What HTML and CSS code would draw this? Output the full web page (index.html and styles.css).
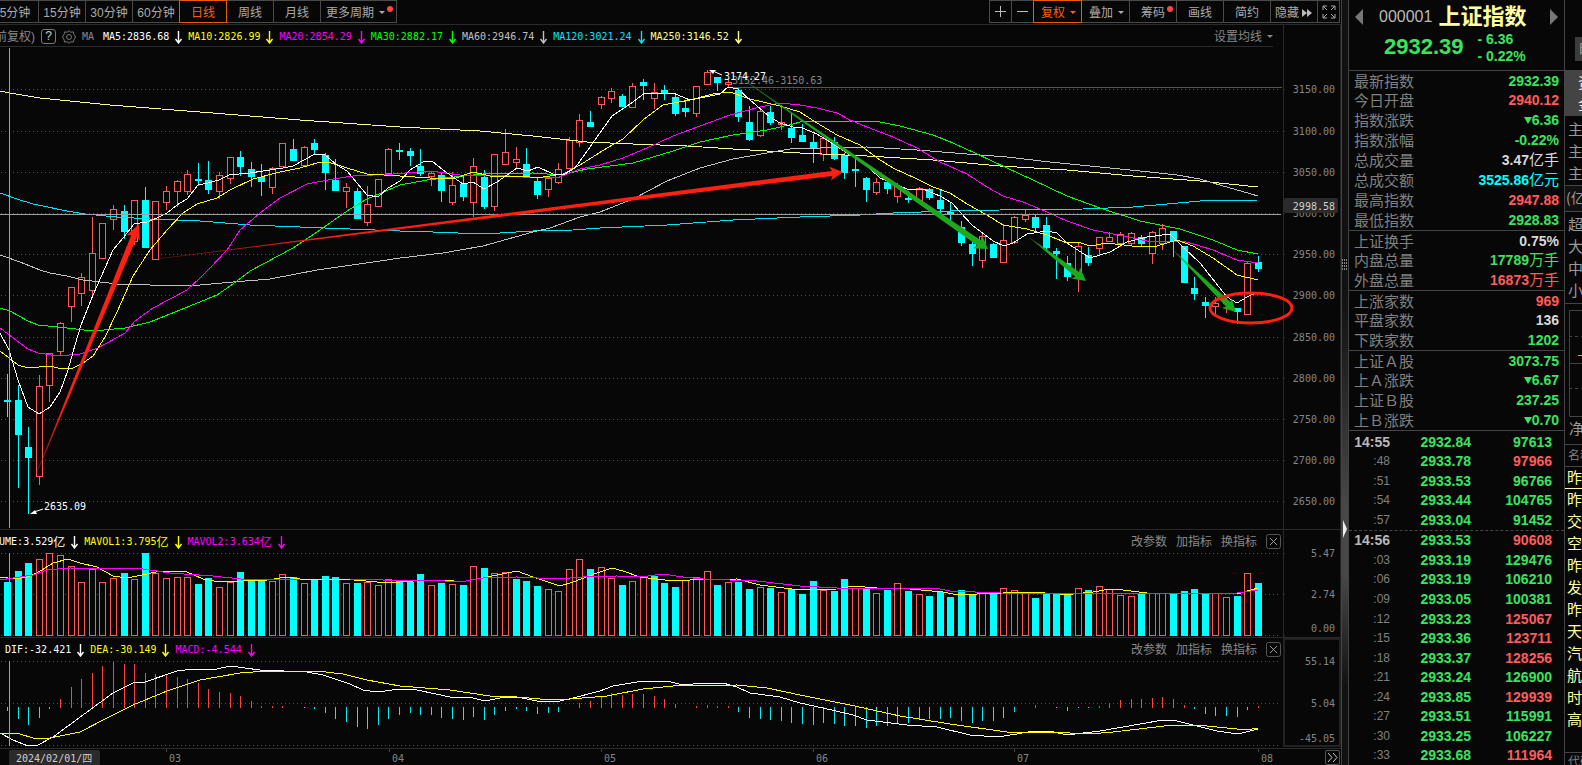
FILE: index.html
```html
<!DOCTYPE html>
<html lang="zh-CN">
<head>
<meta charset="utf-8">
<title>上证指数 000001</title>
<link rel="stylesheet" href="styles.css">
</head>
<body>
<svg class="defs" aria-hidden="true">
  <symbol id="down" viewBox="0 0 9 14"><path d="M4.5 1v12M1.5 9l3 4 3-4" fill="none" stroke="currentColor" stroke-width="1.4"/></symbol>
  <symbol id="cross" viewBox="0 0 15 15"><rect x="0.5" y="0.5" width="14" height="14" rx="2" fill="none" stroke="#555"/><path d="M4 4l7 7M11 4l-7 7" stroke="#999" fill="none"/></symbol>
</svg>

<main class="chart">
  <nav class="toolbar">
    <div class="group periods">
      <button>5分钟</button><button>15分钟</button><button>30分钟</button><button>60分钟</button><button class="active">日线</button><button>周线</button><button>月线</button><button class="more">更多周期<i class="caret"></i><i class="dot"></i></button>
    </div>
    <div class="group tools">
      <button class="square" aria-label="放大"><svg width="13" height="13"><path d="M6.5 1v11M1 6.5h11" stroke="#bbb"/></svg></button>
      <button class="square" aria-label="缩小"><svg width="13" height="13"><path d="M1 6.5h11" stroke="#bbb"/></svg></button>
      <button class="active drop">复权<i class="caret"></i></button>
      <button class="drop">叠加<i class="caret"></i></button>
      <button>筹码<i class="dot"></i></button>
      <button>画线</button>
      <button>简约</button>
      <button class="hide">隐藏<svg width="10" height="8"><path d="M0 0l5 4-5 4zM5 0l5 4-5 4z" fill="#bbb"/></svg></button>
      <button class="square" aria-label="全屏"><svg width="14" height="14"><path d="M1 5V1h4M9 1h4v4M13 9v4H9M5 13H1V9M1 1l4 4M13 1L9 5M13 13L9 9M1 13l4-4" fill="none" stroke="#aaa"/></svg></button>
    </div>
  </nav>

  <section class="pane price">
    <header class="head">
      <div class="legend">
        <span class="adjust">前复权)</span>
        <button class="help">?</button>
        <button class="gear" aria-label="设置"><svg width="14" height="14" viewBox="0 0 14 14" fill="none" stroke="#777"><path d="M7 .7l1.800 1.500 2.500-.3.700 2.500 1.500 2.600-1.500 2.600-.7 2.500-2.500-.3L7 13.300l-1.800-1.500-2.500.3L2 9.600.5 7 2 4.400l.7-2.500 2.500.3z"/><circle cx="7" cy="7" r="2.500"/></svg></button>
        <span class="ma-name">MA</span>
        <span class="item white">MA5:2836.68<svg class="down"><use href="#down"/></svg></span>
        <span class="item yellow">MA10:2826.99<svg class="down"><use href="#down"/></svg></span>
        <span class="item magenta">MA20:2854.29<svg class="down"><use href="#down"/></svg></span>
        <span class="item green">MA30:2882.17<svg class="down"><use href="#down"/></svg></span>
        <span class="item silver">MA60:2946.74<svg class="down"><use href="#down"/></svg></span>
        <span class="item aqua">MA120:3021.24<svg class="down"><use href="#down"/></svg></span>
        <span class="item cream">MA250:3146.52<svg class="down"><use href="#down"/></svg></span>
        <button class="set-ma">设置均线<i class="caret"></i></button>
      </div>
      <div class="gutter"></div>
    </header>
    <svg class="plot" id="price" viewBox="0 47 1341 482" preserveAspectRatio="none"></svg>
  </section>

  <section class="pane volume">
    <header class="head">
      <div class="legend">
        <span class="item white">VOLUME:3.529<b>亿</b><svg class="down"><use href="#down"/></svg></span>
        <span class="item yellow">MAVOL1:3.795<b>亿</b><svg class="down"><use href="#down"/></svg></span>
        <span class="item magenta">MAVOL2:3.634<b>亿</b><svg class="down"><use href="#down"/></svg></span>
        <div class="actions"><button>改参数</button><button>加指标</button><button>换指标</button><button aria-label="关闭"><svg width="15" height="15"><use href="#cross"/></svg></button></div>
      </div>
      <div class="gutter"></div>
    </header>
    <svg class="plot" id="volume" viewBox="0 551 1341 86" preserveAspectRatio="none"></svg>
  </section>

  <section class="pane macd">
    <header class="head">
      <div class="legend">
        <span class="item white">DIF:-32.421<svg class="down"><use href="#down"/></svg></span>
        <span class="item yellow">DEA:-30.149<svg class="down"><use href="#down"/></svg></span>
        <span class="item magenta">MACD:-4.544<svg class="down"><use href="#down"/></svg></span>
        <div class="actions"><button>改参数</button><button>加指标</button><button>换指标</button><button aria-label="关闭"><svg width="15" height="15"><use href="#cross"/></svg></button></div>
      </div>
      <div class="gutter"></div>
    </header>
    <svg class="plot" id="macd" viewBox="0 659 1341 89" preserveAspectRatio="none"></svg>
  </section>

  <footer class="timeline">
    <svg class="plot" id="time" viewBox="0 749 1324 16" preserveAspectRatio="none"></svg>
    <button aria-label="更多"><svg width="13" height="13"><path d="M2 2l4 4.500-4 4.500M7 2l4 4.500-4 4.500" fill="none" stroke="#ccc"/></svg></button>
  </footer>
</main>

<div class="splitter"><i class="grip"></i><i class="handle"></i></div>

<aside class="quote">
  <header class="title">
    <div class="name">
      <button aria-label="上一只"><svg width="8" height="16"><path d="M8 0v16L0 8z" fill="#777"/></svg></button>
      <span class="code">000001</span><h1>上证指数</h1>
      <button aria-label="下一只"><svg width="8" height="16"><path d="M0 0v16l8-8z" fill="#777"/></svg></button>
    </div>
    <div class="last"><strong>2932.39</strong><div><span>- 6.36</span><span>- 0.22%</span></div></div>
  </header>
  <table class="stats" id="stats"></table>
  <table class="ticks" id="ticks"></table>
</aside>

<aside class="strip">
  <div class="s-top"><span>时</span></div>
  <div class="s-tab"><span>资</span><span>金</span></div>
  <div class="s-main"><span>主</span><span>主</span><span>主</span></div>
  <div class="s-unit">(亿)</div>
  <div class="s-size"><span>超</span><span>大</span><span>中</span><span>小</span></div>
  <div class="s-flow"><svg width="14" height="107"><path d="M14 .5H.5v106H14M0 53.500h14" fill="none" stroke="#444"/><path d="M0 26.500h14M0 78.500h14" stroke="#444" stroke-dasharray="3 3"/><path d="M9 45.500h5" stroke="#3be35f"/></svg><span>净</span></div>
  <div class="s-name">名称</div>
  <div class="s-list"><a href="#">昨</a><a href="#">昨</a><a href="#">交</a><a href="#">空</a><a href="#">昨</a><a href="#">发</a><a href="#">昨</a><a href="#">天</a><a href="#">汽</a><a href="#">航</a><a href="#">时</a><a href="#">高</a></div>
  <div class="s-code">代码</div>
</aside>
<script src="chart.js"></script>
</body>
</html>
```

FILE: styles.css
```css
* { box-sizing: border-box; }
body {
  margin: 0;
  display: flex;
  height: 100vh;
  overflow: hidden;
  background: #070707;
  color: #aaa;
  font: 12px/16px "Liberation Sans", "Noto Sans CJK SC", sans-serif;
}
button {
  margin: 0;
  padding: 0;
  border: 0;
  background: none;
  color: inherit;
  font: inherit;
  white-space: nowrap;
}
svg { display: block; }
.defs { position: absolute; width: 0; height: 0; }

.chart { flex: 1; min-width: 0; display: flex; flex-direction: column; overflow: hidden; }

/* toolbar */
.toolbar { display: flex; justify-content: space-between; height: 25px; border-bottom: 1px solid #2a2a2a; }
.group { display: flex; }
.periods { margin-left: -9px; }
.group button {
  position: relative;
  display: flex;
  align-items: center;
  justify-content: center;
  width: 48px;
  height: 23px;
  margin-right: -1px;
  padding-top: 2px;
  border: 1px solid #4a4a4a;
}
.group .square { width: 23px; padding-top: 0; }
.group .more { width: 77px; justify-content: flex-start; padding-left: 5px; }
.group .drop { width: 49px; justify-content: flex-start; padding-left: 7px; }
.group .hide { justify-content: flex-start; padding-left: 4px; gap: 3px; }
.group .active { z-index: 1; border-color: #e85a0c; color: #f26212; }
.tools { margin-right: 2px; }
.caret { margin-left: 5px; border: 3px solid transparent; border-top-color: currentColor; border-bottom: 0; }
.dot { position: absolute; top: 5px; right: 3px; width: 6px; height: 6px; border-radius: 3px; background: #ff4444; }

/* panes */
.pane { display: flex; flex-direction: column; }
.price { flex: 1; min-height: 0; }
.volume, .macd { height: 108px; border-top: 1px solid #2a2a2a; }
.macd { height: 111px; }
.plot { width: 100%; flex: 1; min-width: 0; min-height: 0; overflow: visible; }
.head { display: flex; height: 21px; }
.price .head { height: 22px; }
.legend { flex: 1; display: flex; align-items: center; overflow: hidden; white-space: nowrap; padding-top: 2px; }
.price .legend { margin-right: 10px; border-bottom: 1px solid #2a2a2a; }
.gutter { width: 58px; border-left: 1px solid #2a2a2a; border-right: 1px solid #222; }
.macd .gutter { border: 2px solid #222; border-bottom: 0; }
.item, .ma-name { display: flex; align-items: center; font: 10px/16px "DejaVu Sans Mono", monospace; }
.item b { width: 12px; font: 12px/16px "Noto Sans CJK SC", sans-serif; }
.down { width: 9px; height: 14px; margin: 0 5px; }
.volume .legend > .item:first-child { margin-left: -19px; }
.macd .legend { padding-left: 5px; }
.adjust { width: 36px; margin-left: -5px; color: #888; }
.help { width: 15px; height: 15px; margin-left: 10px; border: 1px solid #777; border-radius: 3px; color: #ccc; line-height: 13px; }
.gear { margin: 0 6px; }
.ma-name { width: 21px; color: #888; }
.set-ma { display: flex; align-items: center; margin-left: auto; color: #888; }
.actions { display: flex; align-items: center; gap: 9px; margin-left: auto; padding-right: 2px; color: #888; }
.white { color: #fff; }
.yellow { color: #ff0; }
.magenta { color: #f0f; }
.green { color: #0f0; }
.silver { color: #c0c0c0; }
.aqua { color: #00e5f5; }
.cream { color: #ffff90; }

.timeline { display: flex; height: 17px; border-top: 1px solid #2a2a2a; }
.timeline button { flex: none; width: 15px; height: 15px; margin: 1px; border: 1px solid #555; border-radius: 2px; }

/* plot contents */
.plot text { font: 10px "DejaVu Sans Mono", monospace; fill: #858585; }
.plot .note { fill: #fff; }
.plot .bright { fill: #d0d0d0; }
.plot .cjk { font-size: 10px; font-family: "DejaVu Sans Mono", "Noto Sans CJK SC", sans-serif; }
.crisp { shape-rendering: crispEdges; }

/* splitter */
.splitter {
  width: 8px;
  display: flex;
  flex-direction: column;
  align-items: center;
  border: solid #444;
  border-width: 0 1px;
  background: linear-gradient(#111 0%, #111 38%, #1c1c1c 45%, #484848 66%, #484848 75%, #111 90%);
}
.grip { width: 6px; height: 12px; margin-top: 258px; background: repeating-linear-gradient(#070707 0 1px, transparent 1px 3px), repeating-linear-gradient(90deg, #888 0 1px, #111 1px 2px); }
.handle { margin-top: 250px; border: 9px solid transparent; border-left: 4px solid #eee; border-right: 0; }

/* quote panel */
.quote { width: 216px; display: flex; flex-direction: column; border-right: 1px solid #444; }
.title { height: 70px; padding: 4px 5px 0 6px; }
.name { display: flex; align-items: center; height: 25px; }
.name button:last-child { margin-left: auto; margin-right: 1px; }
.code { margin: 0 6px 0 16px; font-size: 16px; color: #b8b8b8; }
h1 { margin: 0; padding-bottom: 5px; font: bold 22px/22px "Noto Sans CJK SC", sans-serif; color: #ffffa0; }
.last { display: flex; padding-left: 29px; gap: 14px; color: #3be35f; }
.last strong { padding-top: 5px; font-size: 22px; line-height: 26px; }
.last div { display: flex; flex-direction: column; padding-top: 2px; font: bold 14px/17px "Liberation Sans", sans-serif; }
.stats, .stats tbody, .ticks, .ticks tbody { display: flex; flex-direction: column; }
.stats tr { display: flex; justify-content: space-between; align-items: center; height: 20px; padding: 0 5px; }
.stats tr.rule { border-top: 1px solid #444; }
.stats th { padding: 0; font: 15px/18px "Noto Sans CJK SC", sans-serif; color: #808080; }
.stats td, .ticks td { padding: 0; font: bold 14px/18px "Liberation Sans", "Noto Sans CJK SC", sans-serif; }
.stats td span { font-weight: normal; font-size: 15px; }
.stats .tri { display: inline-block; border: 4px solid transparent; border-top: 7px solid #3be35f; border-bottom: 0; margin-bottom: 1px; }
.ticks, .ticks tbody { flex: 1; min-height: 0; }
.ticks { border-top: 1px solid #444; padding-top: 1px; }
.ticks tr { flex: 1; display: grid; grid-template-columns: 41px 81px 81px; align-items: center; text-align: right; }
.ticks tr.minute { border-top: 1px dashed #444; }
.ticks tr.minute:first-child { border-top: 0; }
.ticks td.sec { font-weight: normal; font-size: 12px; color: #808080; }
.ticks td.min { color: #b8b8b8; }
.up { color: #ff5c5c; }
.dn { color: #3be35f; }
.flat { color: #d8d8d8; }
.cy { color: #0ff; }

/* clipped side strip */
.strip { width: 17px; display: flex; flex-direction: column; overflow: hidden; font: 15px/22px "Noto Sans CJK SC", sans-serif; color: #999; white-space: nowrap; }
.strip span, .strip a { display: block; }
.s-top { height: 70px; padding: 37px 0 9px 10px; }
.s-top span { background: #3c3c3c; padding-left: 4px; height: 24px; }
.s-tab { height: 46px; background: #444; padding: 1px 0 0 13px; color: #eee; }
.s-main { height: 70px; padding: 2px 0 0 3px; border-bottom: 1px solid #444; }
.s-unit { height: 26px; padding-left: 1px; border-bottom: 1px solid #444; font-size: 14px; background: #111; }
.s-size { height: 92px; padding: 1px 0 0 3px; border-bottom: 1px solid #444; }
.s-flow { height: 141px; padding: 6px 0 0 4px; border-bottom: 1px solid #444; }
.s-name { height: 22px; padding-left: 3px; border-bottom: 1px solid #444; font-size: 12px; line-height: 20px; color: #808080; }
.s-list { flex: 1; padding-left: 2px; line-height: 20px; }
.s-list a { height: 22px; color: #ffffa0; text-decoration: none; }
.s-list a:first-child { margin-left: -2px; padding-left: 2px; border-bottom: 1px solid #ffffa0; }
.s-code { height: 13px; padding-left: 3px; border-top: 1px solid #444; font-size: 12px; line-height: 16px; color: #808080; }
```

FILE: chart.js
```js
const NS = 'http://www.w3.org/2000/svg';
const RED = '#ff5a5a', CYAN = '#00ffff';
const el = (id) => document.getElementById(id);

function add(parent, tag, attrs, text) {
  const node = document.createElementNS(NS, tag);
  for (const k in attrs) node.setAttribute(k, attrs[k]);
  if (text) node.textContent = text;
  parent.appendChild(node);
  return node;
}
const xAt = (i) => Math.floor(7.4 + i * 10.6);
const line = (svg, x1, y1, x2, y2, stroke, extra) =>
  add(svg, 'line', Object.assign({ x1, y1, x2, y2, stroke, class: 'crisp' }, extra));
const label = (svg, x, y, text, cls, anchor) =>
  add(svg, 'text', { x, y: y + 4, class: cls || '', 'text-anchor': anchor || 'start' }, text);
const curve = (svg, points, stroke) =>
  add(svg, 'polyline', { points, stroke, fill: 'none', class: 'crisp' });

function grid(svg, rows) {
  rows.forEach(([y, text, ty]) => {
    line(svg, 1, y + 0.5, 1280, y + 0.5, '#505050', { 'stroke-dasharray': '1 3' });
    if (text) {
      line(svg, 1283, y + 0.5, 1285, y + 0.5, '#333');
      label(svg, 1335, ty || y, text, '', 'end');
    }
  });
}
function bar(svg, x, top, bottom, color) {
  if (color === RED) add(svg, 'rect', { x: x - 2.5, y: top + 0.5, width: 6, height: Math.max(1, bottom - top - 1), fill: '#070707', stroke: RED, class: 'crisp' });
  else add(svg, 'rect', { x: x - 3, y: top, width: 7, height: Math.max(2, bottom - top), fill: CYAN, class: 'crisp' });
}

/* colour, high, body top, body bottom, low */
const candles = `c374 400 402 417,c385 400 435 488,c427 447 458 514,r375 386 477 485,r353 353 386 402,r322 323 352 355,r287 287 307 322,r273 277 294 306,r217 253 291 297,r223 223 259 259,r205 209 220 230,c205 211 232 239,r200 200 242 245,c187 200 248 248,r201 201 260 260,r186 191 203 210,r180 181 192 207,r170 174 192 195,c163 179 181 186,c161 180 190 194,r172 175 192 199,r157 157 179 184,c151 157 167 176,c162 169 177 187,c164 177 182 196,r167 168 188 194,r143 143 167 167,c139 149 161 161,r146 147 166 166,c139 143 150 155,c153 155 173 190,c159 180 191 191,r183 187 192 208,c188 191 219 219,r186 204 223 226,r179 179 207 207,r148 149 174 174,c143 150 152 160,
c148 151 156 166,c149 166 174 176,r171 173 177 186,c173 175 191 202,r172 185 203 205,c176 184 197 201,r158 166 203 217,c170 177 207 209,r154 154 207 211,r129 152 165 165,r147 159 163 168,c148 164 176 176,c178 181 195 199,r176 178 190 197,r163 169 183 184,r137 140 169 169,r114 120 143 147,c111 122 127 127,r96 97 105 109,r88 91 99 103,c94 96 107 107,r83 86 108 108,c79 82 86 100,r83 92 99 109,c85 90 93 100,c95 97 114 116,c100 108 112 117,r86 86 114 117,r70 72 85 85,c77 77 83 91,r79 82 85 88,c88 90 117 122,c106 122 140 141,r110 111 136 137,c106 112 123 125,r105 122 125 130,c113 128 138 143,
c124 135 142 142,c134 142 148 163,r137 138 155 161,c137 142 159 160,c153 155 173 179,c156 169 171 187,c177 178 190 202,r178 182 193 195,c181 182 189 194,r183 186 197 203,c191 198 200 203,r187 188 201 201,c188 189 198 200,c190 200 209 213,c202 212 214 221,c221 227 243 246,c242 244 254 266,r232 236 261 268,c243 244 258 258,r224 240 263 263,r216 217 243 244,r210 215 220 222,c215 217 228 232,c217 225 248 250,c248 251 254 279,c256 263 277 281,r243 246 279 292,c247 255 263 266,r237 237 249 256,r232 237 242 242,r232 234 244 247,r232 233 244 246,c235 237 244 247,r231 232 254 264,r224 228 244 250,c231 231 241 257,c246 246 283 283,c277 288 294 300,c297 302 306 318,r297 303 307 314,r298 302 304 313,c308 308 312 324,r262 263 315 315,c256 262 269 272`.split(',').map((s) => {
  s = s.trim();
  return [s[0] === 'r' ? RED : CYAN].concat(s.slice(1).split(' ').map(Number));
});

const averages = {
  '#ffff90': '0,91 10,93 40,98 110,105 200,112 300,120 400,127 480,131 533,136 587,142 633,144 687,146 733,149 800,153 867,156 933,160 1000,166 1067,170 1133,176 1200,181 1258,187',
  '#00e5f5': '0,193 17,199 33,204 67,211 85,214 117,217 150,219 200,221 250,225 300,227 350,229 400,231 433,232 483,234 533,231 573,230 600,228 667,225 733,220 800,217 860,215 893,213 950,211 1000,210 1083,209 1133,207 1167,204 1200,201 1258,200',
  '#c0c0c0': '0,255 20,262 40,270 50,273 67,276 83,280 117,284 150,285 200,285 233,282 270,279 317,270 387,260 400,258 443,253 483,246 533,232 550,228 580,217 600,212 633,199 667,181 700,168 733,159 767,153 790,149 820,148 867,147 917,150 967,154 1007,157 1050,162 1100,167 1150,172 1177,175 1200,179 1213,183 1258,196',
  '#00ff00': '0,308 10,311 28,321 38,325 58,327 93,331 125,328 150,322 185,308 217,295 233,284 250,271 293,248 317,232 350,209 367,199 400,185 427,180 463,176 483,174 533,173 560,175 587,169 633,163 673,151 700,142 733,135 767,130 793,124 800,122 850,121 880,122 900,126 933,135 953,143 977,154 1007,168 1033,180 1067,196 1100,208 1140,221 1180,229 1213,240 1237,250 1258,254',
  '#ff00ff': '0,328 28,349 38,353 58,356 80,354 98,348 125,333 135,321 153,308 187,290 200,278 210,268 227,250 240,230 260,213 280,198 307,184 333,179 353,176 373,175 393,174 430,171 460,175 497,175 523,177 557,178 580,169 600,165 623,158 647,148 673,136 700,126 730,115 760,107 780,103 800,105 817,108 837,113 850,120 867,127 893,137 917,148 940,162 967,174 987,187 1003,196 1023,202 1047,212 1067,221 1093,230 1133,238 1147,241 1183,241 1200,246 1213,250 1237,260 1258,263',
  '#ffff00': '0,351 18,365 28,368 50,366 62,369 73,368 83,363 93,356 105,337 117,312 133,276 150,250 167,230 183,213 197,204 217,198 230,190 253,179 280,172 300,168 317,163 328,162 347,168 367,174 400,176 430,178 453,179 473,172 490,176 523,176 537,178 550,176 563,174 580,165 607,148 623,139 643,120 663,105 690,100 713,94 730,92 750,99 780,106 800,112 817,123 837,135 860,145 877,158 893,168 917,179 933,187 950,193 967,204 987,215 1003,225 1027,229 1047,235 1067,243 1078,242 1090,246 1107,243 1140,247 1157,246 1177,240 1193,246 1213,258 1237,275 1258,280',
  '#ffffff': '0,333 9,350 18,380 28,407 39,414 50,407 60,392 68,370 75,345 81,325 93,295 105,268 113,250 123,238 134,224 147,222 157,218 167,213 177,205 187,199 198,185 208,183 219,180 229,175 250,173 283,168 293,166 304,160 315,154 325,155 337,165 347,171 357,183 367,195 378,197 388,188 400,181 410,170 423,162 432,161 443,170 453,177 463,184 473,182 484,189 497,182 517,168 528,171 538,167 553,174 563,175 575,168 590,147 602,130 612,116 630,104 645,93 673,93 690,100 720,94 728,87 738,89 750,100 770,117 780,123 793,127 800,127 817,134 830,142 850,155 863,162 880,178 907,189 923,189 940,196 952,203 960,212 972,225 993,241 1004,246 1013,243 1027,234 1047,231 1057,233 1067,243 1090,258 1110,252 1127,242 1147,237 1170,234 1183,247 1200,263 1227,297 1237,303 1247,297 1258,292'
};

function arrow(svg, x1, y1, x2, y2, half, head, wing, color, id, solidFrom) {
  const len = Math.hypot(x2 - x1, y2 - y1), ux = (x2 - x1) / len, uy = (y2 - y1) / len;
  const at = (d, o) => `${(x1 + ux * d - uy * o).toFixed(1)},${(y1 + uy * d + ux * o).toFixed(1)}`;
  const g = add(svg, 'linearGradient', { id, gradientUnits: 'userSpaceOnUse', x1, y1, x2, y2 });
  add(g, 'stop', { offset: 0, 'stop-color': color, 'stop-opacity': 0.4 });
  add(g, 'stop', { offset: solidFrom, 'stop-color': color });
  add(svg, 'polygon', {
    points: [at(0, 0.2), at(len - head, half), at(len - head - 2, wing), at(len, 0), at(len - head - 2, -wing), at(len - head, -half), at(0, -0.2)].join(' '),
    fill: `url(#${id})`
  });
}

/* price pane */
const price = el('price');
grid(price, [[89, '3150.00'], [131, '3100.00'], [172, '3050.00'], [213, '3000.00'], [254, '2950.00'], [295, '2900.00'], [337, '2850.00'], [378, '2800.00'], [419, '2750.00'], [460, '2700.00'], [501, '2650.00']]);
line(price, 728, 87.5, 1282, 87.5, '#555');
candles.forEach(([color, high, top, bottom, low], i) => {
  const x = xAt(i);
  line(price, x + 0.5, high, x + 0.5, low, color);
  bar(price, x, top, bottom, color);
});
for (const color in averages) curve(price, averages[color], color);
line(price, 0, 214.5, 1281, 214.5, '#a0a0a0');
line(price, 9.5, 48, 9.5, 528, '#a0a0a0');
line(price, 1283.5, 47, 1283.5, 529, '#2a2a2a');
line(price, 1340.5, 47, 1340.5, 529, '#222');
label(price, 732, 80, '3152.46-3150.63');
label(price, 724, 76, '3174.27', 'note');
label(price, 44, 506, '2635.09', 'note');
add(price, 'path', { d: 'M722 75l-7-3M43 509l-9 3', stroke: '#fff' });
add(price, 'path', { d: 'M709 70h7l-3 4zM30 514l5-4 2 4z', fill: '#fff' });
add(price, 'rect', { x: 1284, y: 198, width: 54, height: 15, rx: 2, fill: '#2b2b2b' });
label(price, 1335, 206, '2998.58', 'bright', 'end');
arrow(price, 33, 482, 139, 224, 3, 13, 7, '#ff2010', 'rise', 0.3);
arrow(price, 157, 259, 843, 172, 2.5, 11, 7, '#ff2010', 'trend', 0.25);
arrow(price, 738, 76, 988, 249, 3, 11, 8, '#1ea81e', 'fall1', 0.3);
arrow(price, 1030, 238, 1086, 281, 3, 11, 7, '#1ea81e', 'fall2', 0.3);
arrow(price, 1171, 248, 1236, 312, 3, 11, 7, '#1ea81e', 'fall3', 0.3);
add(price, 'ellipse', { cx: 1251, cy: 308, rx: 41, ry: 15, fill: 'none', stroke: '#ff2010', 'stroke-width': 3 });

/* volume pane */
const volume = el('volume');
grid(volume, [[553, '5.47'], [594, '2.74'], [635, '0.00', 628]]);
const volTops = [582, 571, 563, 559, 553, 555, 566, 582, 569, 582, 578, 573, 579, 553, 573, 578, 577, 577, 584, 578, 587, 582, 572, 580, 580, 581, 574, 577, 583, 580, 576, 577, 583, 583, 582, 585, 579, 580, 582, 574, 585, 583, 584, 585, 566, 568, 573, 572, 579, 581, 586, 589, 591, 569, 559, 569, 567, 578, 585, 581, 576, 576, 583, 587, 580, 577, 571, 585, 582, 582, 589, 587, 588, 592, 589, 594, 581, 590, 591, 579, 588, 588, 593, 590, 583, 591, 594, 596, 592, 597, 590, 594, 593, 594, 588, 590, 593, 598, 594, 594, 594, 588, 590, 586, 589, 595, 596, 593, 593, 593, 593, 591, 589, 593, 593, 597, 596, 573, 583];
/* days whose volume colour follows the previous close, not the candle body */
const flipped = new Set([48, 60, 61, 64, 80]);
volTops.forEach((y, i) => {
  let color = candles[i][0];
  if (flipped.has(i)) color = color === RED ? CYAN : RED;
  bar(volume, xAt(i), y, 636, color);
});
curve(volume, '0,577 15,579 27,577 37,573 53,563 68,559 80,563 97,567 113,576 127,578 147,574 160,571 187,572 203,579 220,582 267,580 287,577 300,579 343,579 377,582 400,582 427,580 447,580 460,582 477,579 497,575 517,571 533,577 560,586 573,582 597,573 612,568 623,571 640,577 673,581 690,580 737,579 760,585 800,590 837,589 853,586 877,588 910,589 943,592 953,594 977,594 1030,592 1060,594 1073,594 1093,592 1110,589 1123,590 1147,593 1173,594 1197,593 1237,594 1258,588', '#ffff00');
curve(volume, '0,580 33,575 47,570 70,568 143,569 170,573 213,576 250,580 300,579 350,579 383,580 430,580 460,582 483,578 517,577 557,579 583,577 617,576 640,577 663,574 683,577 703,579 757,581 783,584 800,586 837,588 900,588 940,589 950,591 1000,593 1067,594 1085,593 1147,593 1237,593 1258,590', '#ff00ff');
line(volume, 9.5, 553, 9.5, 636, '#a0a0a0');
line(volume, 1283.5, 551, 1283.5, 637, '#2a2a2a');
line(volume, 1340.5, 551, 1340.5, 637, '#222');

/* MACD pane */
const macd = el('macd');
grid(macd, [[661, '55.14'], [703, '5.04'], [745, '-45.05', 738]]);
const tips = [711, 719, 725, 718, 709, 699, 687, 679, 673, 666, 662, 664, 664, 673, 674, 675, 677, 679, 683, 689, 692, 693, 696, 701, 706, 706, 706, 707, 708, 709, 713, 719, 722, 727, 729, 725, 719, 715, 713, 715, 715, 718, 719, 720, 717, 720, 715, 711, 709, 711, 714, 713, 712, 707, 703, 701, 696, 693, 695, 694, 694, 696, 699, 704, 707, 706, 705, 706, 706, 712, 718, 719, 720, 721, 723, 724, 725, 723, 724, 726, 726, 728, 726, 726, 724, 723, 720, 719, 719, 718, 721, 723, 721, 721, 718, 712, 707, 705, 707, 708, 711, 708, 708, 706, 703, 700, 699, 699, 698, 697, 699, 705, 709, 714, 716, 716, 717, 710, 706];
tips.forEach((y, i) => {
  const x = xAt(i) + 0.5;
  if (y < 707) line(macd, x, y, x, 708, '#ff4040');
  if (y > 707) line(macd, x, 707, x, y, '#00f0f0');
});
curve(macd, '0,733 13,740 28,746 38,745 53,737 83,715 113,693 135,682 145,682 177,671 193,669 217,669 230,666 260,670 307,672 323,675 350,684 363,690 377,692 400,689 417,690 450,697 473,698 485,701 500,698 517,697 537,701 560,701 573,698 600,691 613,686 643,681 667,681 683,685 703,683 723,683 737,687 750,693 780,697 800,703 823,708 853,715 867,720 907,725 937,727 970,735 997,737 1017,734 1033,731 1050,731 1067,735 1100,731 1123,727 1163,720 1177,721 1197,726 1217,731 1238,734 1258,729', '#ffffff');
curve(macd, '0,733 20,734 33,738 50,738 80,732 107,718 133,705 167,691 200,680 240,673 267,671 317,671 343,674 367,680 400,686 450,690 490,696 517,697 540,699 570,699 607,696 643,689 673,686 737,685 767,688 800,695 850,705 900,716 950,724 1007,732 1050,732 1090,734 1113,732 1173,725 1197,725 1247,730 1258,728', '#ffff00');
line(macd, 9.5, 661, 9.5, 746, '#a0a0a0');
add(macd, 'path', { d: 'M1284 659v87h56v-87', fill: 'none', stroke: '#222', 'stroke-width': 2, class: 'crisp' });

/* time axis */
const time = el('time');
[[166, '03'], [389, '04'], [601, '05'], [813, '06'], [1014, '07'], [1258, '08']].forEach(([x, month]) => {
  line(time, x + 0.5, 749, x + 0.5, 752, '#444');
  label(time, x + 3, 758, month);
});
add(time, 'rect', { x: 9, y: 750, width: 91, height: 16, rx: 2, fill: '#2b2b2b' });
label(time, 16, 758, '2024/02/01/四', 'bright cjk');

/* quote tables: label, value, unit, colour; "-" marks a rule above the row */
el('stats').innerHTML = `-最新指数|2932.39||dn
今日开盘|2940.12||up
指数涨跌|v6.36||dn
指数涨幅|-0.22%||dn
总成交量|3.47|亿手|flat
总成交额|3525.86|亿元|cy
最高指数|2947.88||up
最低指数|2928.83||dn
-上证换手|0.75%||flat
内盘总量|17789|万手|dn
外盘总量|16873|万手|up
-上涨家数|969||up
平盘家数|136||flat
下跌家数|1202||dn
-上证Ａ股|3073.75||dn
上Ａ涨跌|v6.67||dn
上证Ｂ股|237.25||dn
上Ｂ涨跌|v0.70||dn`.split('\n').map((row) => {
  const [name, value, unit, cls] = row.replace(/^-/, '').split('|');
  return `<tr${row[0] === '-' ? ' class="rule"' : ''}><th scope="row">${name}</th><td class="${cls}">${value.replace('v', '<i class="tri"></i>')}<span>${unit}</span></td></tr>`;
}).join('');

el('ticks').innerHTML = `14:55 2932.84 97613 dn
:48 2933.78 97966 up
:51 2933.53 96766 dn
:54 2933.44 104765 dn
:57 2933.04 91452 dn
14:56 2933.53 90608 up
:03 2933.19 129476 dn
:06 2933.19 106210 dn
:09 2933.05 100381 dn
:12 2933.23 125067 up
:15 2933.36 123711 up
:18 2933.37 128256 up
:21 2933.24 126900 dn
:24 2933.85 129939 up
:27 2933.51 115991 dn
:30 2933.25 106227 dn
:33 2933.68 111964 up`.split('\n').map((row) => {
  const [t, p, v, cls] = row.split(' ');
  const minute = t[0] !== ':';
  return `<tr${minute ? ' class="minute"' : ''}><td class="${minute ? 'min' : 'sec'}">${t}</td><td class="dn">${p}</td><td class="${cls}">${v}</td></tr>`;
}).join('');
```
